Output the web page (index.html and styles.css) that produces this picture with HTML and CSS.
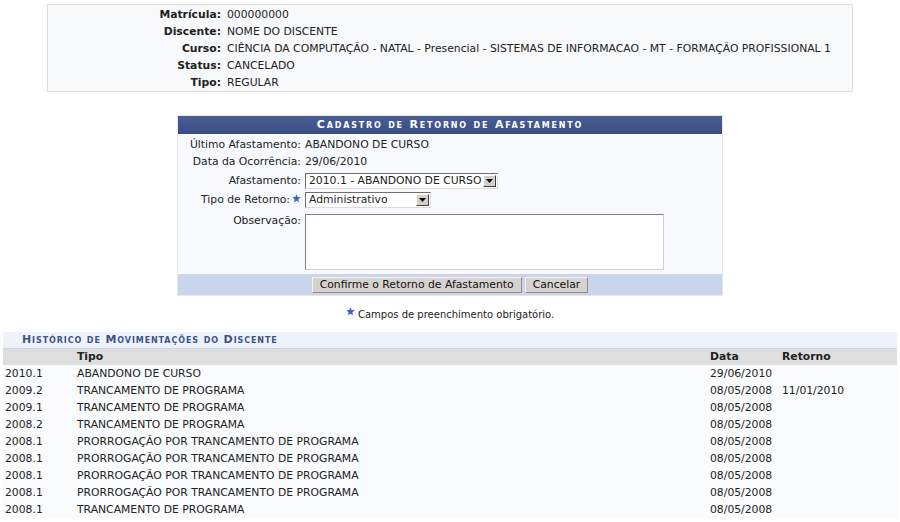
FILE: index.html
```html
<!DOCTYPE html>
<html lang="pt-BR">
<head>
<meta charset="utf-8">
<title>Cadastro de Retorno de Afastamento</title>
<link rel="stylesheet" href="styles.css">
</head>
<body>
<div class="info-box">
  <div class="info-row"><span class="info-label">Matrícula:</span><span class="info-value">000000000</span></div>
  <div class="info-row"><span class="info-label">Discente:</span><span class="info-value">NOME DO DISCENTE</span></div>
  <div class="info-row"><span class="info-label">Curso:</span><span class="info-value">CIÊNCIA DA COMPUTAÇÃO - NATAL - Presencial - SISTEMAS DE INFORMACAO - MT - FORMAÇÃO PROFISSIONAL 1</span></div>
  <div class="info-row"><span class="info-label">Status:</span><span class="info-value">CANCELADO</span></div>
  <div class="info-row"><span class="info-label">Tipo:</span><span class="info-value">REGULAR</span></div>
</div>

<div class="form-box">
  <div class="form-caption">Cadastro de Retorno de Afastamento</div>
  <div class="form-body">
    <div class="form-row"><span class="form-label">Último Afastamento:</span><span class="form-value">ABANDONO DE CURSO</span></div>
    <div class="form-row"><span class="form-label">Data da Ocorrência:</span><span class="form-value">29/06/2010</span></div>
    <div class="form-row field-row"><span class="form-label">Afastamento:</span>
      <div class="select select-wide"><span class="select-text">2010.1 - ABANDONO DE CURSO</span><span class="select-arrow"><svg width="7" height="4" viewBox="0 0 7 4"><path d="M0 0h7L3.5 4z" fill="#000"/></svg></span></div>
    </div>
    <div class="form-row field-row"><span class="form-label">Tipo de Retorno:<svg class="star" width="9" height="9" viewBox="0 0 10 10"><path d="M5 0.3l1.3 3.1 3.4 0.3-2.6 2.2 0.8 3.3L5 7.4 2.1 9.2l0.8-3.3L0.3 3.7l3.4-0.3z" fill="#3a63c9"/></svg></span>
      <div class="select select-narrow"><span class="select-text">Administrativo</span><span class="select-arrow"><svg width="7" height="4" viewBox="0 0 7 4"><path d="M0 0h7L3.5 4z" fill="#000"/></svg></span></div>
    </div>
    <div class="form-row area-row"><span class="form-label">Observação:</span><div class="textarea"></div></div>
  </div>
  <div class="form-footer">
    <span class="btn">Confirme o Retorno de Afastamento</span>
    <span class="btn">Cancelar</span>
  </div>
</div>

<p class="required-note"><svg class="star" width="9" height="9" viewBox="0 0 10 10"><path d="M5 0.3l1.3 3.1 3.4 0.3-2.6 2.2 0.8 3.3L5 7.4 2.1 9.2l0.8-3.3L0.3 3.7l3.4-0.3z" fill="#3a63c9"/></svg> Campos de preenchimento obrigatório.</p>

<div class="history">
  <div class="history-caption">Histórico de Movimentações do Discente</div>
  <div class="hist-row hist-head"><span class="c-year"></span><span class="c-tipo">Tipo</span><span class="c-data">Data</span><span class="c-ret">Retorno</span></div>
  <div class="hist-row"><span class="c-year">2010.1</span><span class="c-tipo">ABANDONO DE CURSO</span><span class="c-data">29/06/2010</span><span class="c-ret"></span></div>
  <div class="hist-row"><span class="c-year">2009.2</span><span class="c-tipo">TRANCAMENTO DE PROGRAMA</span><span class="c-data">08/05/2008</span><span class="c-ret">11/01/2010</span></div>
  <div class="hist-row"><span class="c-year">2009.1</span><span class="c-tipo">TRANCAMENTO DE PROGRAMA</span><span class="c-data">08/05/2008</span><span class="c-ret"></span></div>
  <div class="hist-row"><span class="c-year">2008.2</span><span class="c-tipo">TRANCAMENTO DE PROGRAMA</span><span class="c-data">08/05/2008</span><span class="c-ret"></span></div>
  <div class="hist-row"><span class="c-year">2008.1</span><span class="c-tipo">PRORROGAÇÃO POR TRANCAMENTO DE PROGRAMA</span><span class="c-data">08/05/2008</span><span class="c-ret"></span></div>
  <div class="hist-row"><span class="c-year">2008.1</span><span class="c-tipo">PRORROGAÇÃO POR TRANCAMENTO DE PROGRAMA</span><span class="c-data">08/05/2008</span><span class="c-ret"></span></div>
  <div class="hist-row"><span class="c-year">2008.1</span><span class="c-tipo">PRORROGAÇÃO POR TRANCAMENTO DE PROGRAMA</span><span class="c-data">08/05/2008</span><span class="c-ret"></span></div>
  <div class="hist-row"><span class="c-year">2008.1</span><span class="c-tipo">PRORROGAÇÃO POR TRANCAMENTO DE PROGRAMA</span><span class="c-data">08/05/2008</span><span class="c-ret"></span></div>
  <div class="hist-row"><span class="c-year">2008.1</span><span class="c-tipo">TRANCAMENTO DE PROGRAMA</span><span class="c-data">08/05/2008</span><span class="c-ret"></span></div>
</div>
</body>
</html>
```
FILE: styles.css
```css
* { box-sizing: border-box; }
html, body { margin: 0; padding: 0; background: #fff; }
body {
  font-family: "DejaVu Sans", Verdana, sans-serif;
  font-size: 10.8px;
  color: #222;
  overflow: hidden;
}

.info-box {
  width: 806px;
  margin: 4px auto 0;
  background: #f8f9fb;
  border: 1px solid #dcdcdc;
  padding: 1px 0 0;
}
.info-row {
  display: grid;
  grid-template-columns: 173px 1fr;
  column-gap: 6px;
  line-height: 17px;
}
.info-label { text-align: right; font-weight: bold; }
.info-value { white-space: nowrap; }

.form-box {
  width: 546px;
  margin: 23px auto 0;
  background: #f7f9fc;
  border: 1px solid #e4e6ea;
}
.form-caption {
  height: 18px;
  line-height: 18px;
  background: linear-gradient(#4a5d94, #3a4d83);
  color: #fff;
  font-weight: bold;
  font-variant: small-caps;
  letter-spacing: 1.8px;
  text-align: center;
  font-size: 11px;
}
.form-body { padding: 2px 0 4px; }
.form-row {
  display: grid;
  grid-template-columns: 123px 1fr;
  column-gap: 4px;
  line-height: 17px;
  align-items: center;
}
.form-label { text-align: right; white-space: nowrap; }
.form-label .star { margin-left: 2px; vertical-align: 0; }
.field-row { margin-top: 3px; line-height: 16px; }
.area-row { align-items: start; margin-top: 6px; }
.area-row .form-label { line-height: 14px; }

.select {
  display: flex;
  height: 16px;
  background: #fff;
  border: 1px solid;
  border-color: #6f6f6f #dcdcdc #dcdcdc #6f6f6f;
  align-items: center;
}
.select-wide { width: 193px; }
.select-narrow { width: 126px; }
.select-text { flex: 1; padding-left: 3px; line-height: 14px; white-space: nowrap; overflow: hidden; }
.select-arrow {
  width: 13px;
  height: 12px;
  margin-right: 1px;
  background: #d4d0c8;
  border: 1px solid;
  border-color: #fff #404040 #404040 #fff;
  display: flex;
  align-items: center;
  justify-content: center;
}
.textarea {
  width: 359px;
  height: 56px;
  background: #fff;
  border: 1px solid #7f7f7f;
  border-right-color: #cfcfcf;
  border-bottom-color: #cfcfcf;
}

.form-footer {
  background: #c8d5ec;
  height: 21px;
  display: flex;
  justify-content: center;
  align-items: center;
  gap: 3px;
}
.btn {
  display: inline-block;
  background: #d6d3ce;
  border: 1px solid;
  border-color: #f4f3f1 #8f8c86 #8f8c86 #f4f3f1;
  padding: 0 7px;
  height: 16px;
  line-height: 14px;
  color: #111;
}

.required-note {
  text-align: center;
  font-size: 10px;
  margin: 11px 0 0;
  line-height: 13px;
}
.required-note .star { vertical-align: 2px; }

.history { margin: 11px 3px 0; }
.history-caption {
  height: 17px;
  line-height: 16px;
  background: #eef2f9;
  border-bottom: 1px solid #c8d5ec;
  color: #3e538a;
  font-weight: bold;
  font-variant: small-caps;
  letter-spacing: 0.9px;
  padding-left: 19px;
  font-size: 11px;
}
.hist-row {
  display: grid;
  grid-template-columns: 72px 633px 72px 1fr;
  line-height: 17px;
  height: 17px;
  background: #fafbfd;
  padding-left: 2px;
  white-space: nowrap;
}
.hist-head { background: #dedede; font-weight: bold; height: 16px; line-height: 16px; }
```
